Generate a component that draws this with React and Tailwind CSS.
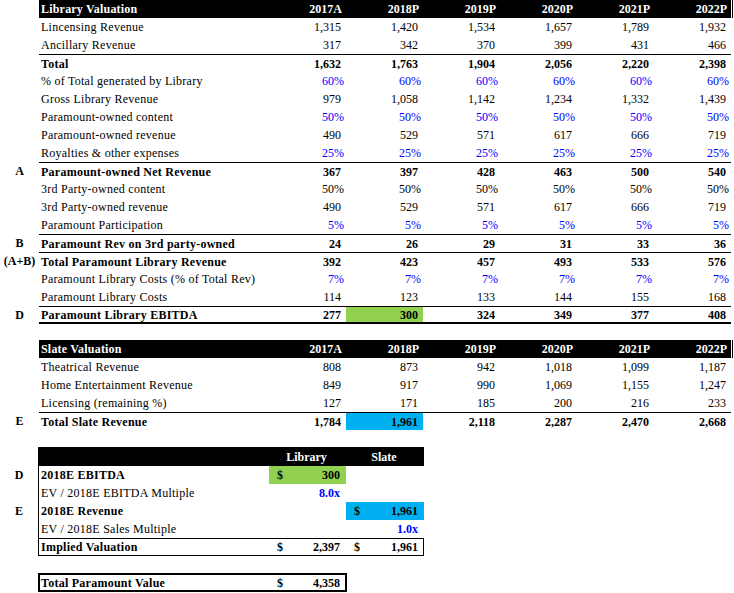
import React from "react";

const YEARS = ["2017A", "2018P", "2019P", "2020P", "2021P", "2022P"];

function Header({ title }) {
  return (
    <div className="flex h-[18px]">
      <div className="w-[39px]" />
      <div className="w-[692px] bg-black text-white font-bold grid grid-cols-[230px_repeat(6,77px)] items-center">
        <div className="pl-[2px] tracking-[0.2px]">{title}</div>
        {YEARS.map((y) => (
          <div key={y} className="text-right pr-[4px]">{y}</div>
        ))}
      </div>
      <div className="w-[1px] ml-[1px] bg-black" />
    </div>
  );
}

function Row({ letter, label, vals, bold, blue, pct, border, thick, hl }) {
  return (
    <div className="flex h-[18px]">
      <div className="w-[39px] flex items-center justify-center font-bold">{letter}</div>
      <div
        className={
          "w-[692px] grid grid-cols-[230px_repeat(6,77px)] " +
          (border ? "border-t border-black " : "") +
          (thick ? "border-b-2 border-black " : "") +
          (bold ? "font-bold" : "")
        }
      >
        <div className="pl-[2px] flex items-center whitespace-nowrap tracking-[0.25px]">{label}</div>
        {vals.map((v, i) => (
          <div
            key={i}
            className={
              "flex items-center justify-end " +
              (pct ? "pr-[2px] " : "pr-[5px] ") +
              (blue ? "text-[#0000ff] " : "") +
              (hl && hl[i] ? hl[i] : "")
            }
          >
            {v}
          </div>
        ))}
      </div>
    </div>
  );
}

function BoxRow({ letter, label, bold, lib, libColor, libDollar, slate, slateColor, slateDollar, blueVal, border }) {
  return (
    <div className="flex h-[18px]">
      <div className="w-[38px] flex items-center justify-center font-bold">{letter}</div>
      <div
        className={
          "w-[386px] border-l border-black grid grid-cols-[230px_77px_78px] " +
          (border ? "border-t border-b border-r" : "")
        }
      >
        <div className={"pl-[2px] flex items-center whitespace-nowrap tracking-[0.25px] " + (bold ? "font-bold" : "")}>{label}</div>
        <div className={"flex items-center justify-between pl-[8px] pr-[6px] " + (libColor || "")}>
          <span className="font-bold">{libDollar ? "$" : ""}</span>
          <span className={bold || blueVal ? "font-bold " + (blueVal ? "text-[#0000ff]" : "") : ""}>{lib}</span>
        </div>
        <div className={"flex items-center justify-between pl-[8px] pr-[6px] " + (slateColor || "")}>
          <span className="font-bold">{slateDollar ? "$" : ""}</span>
          <span className={bold || blueVal ? "font-bold " + (blueVal ? "text-[#0000ff]" : "") : ""}>{slate}</span>
        </div>
      </div>
    </div>
  );
}

export default function App() {
  const P = (s) => Array(6).fill(s);
  return (
    <div className="w-[734px] h-[593px] bg-white text-black text-[12px] leading-none font-['Liberation_Serif',serif] overflow-hidden">
      <Header title="Library Valuation" />
      <Row label="Lincensing Revenue" vals={["1,315", "1,420", "1,534", "1,657", "1,789", "1,932"]} />
      <Row label="Ancillary Revenue" vals={["317", "342", "370", "399", "431", "466"]} />
      <Row label="Total" bold border vals={["1,632", "1,763", "1,904", "2,056", "2,220", "2,398"]} />
      <Row label="% of Total generated by Library" blue pct vals={P("60%")} />
      <Row label="Gross Library Revenue" vals={["979", "1,058", "1,142", "1,234", "1,332", "1,439"]} />
      <Row label="Paramount-owned content" blue pct vals={P("50%")} />
      <Row label="Paramount-owned revenue" vals={["490", "529", "571", "617", "666", "719"]} />
      <Row label="Royalties & other expenses" blue pct vals={P("25%")} />
      <Row letter="A" label="Paramount-owned Net Revenue" bold border vals={["367", "397", "428", "463", "500", "540"]} />
      <Row label="3rd Party-owned content" pct vals={P("50%")} />
      <Row label="3rd Party-owned revenue" vals={["490", "529", "571", "617", "666", "719"]} />
      <Row label="Paramount Participation" blue pct vals={P("5%")} />
      <Row letter="B" label="Paramount Rev on 3rd party-owned" bold border vals={["24", "26", "29", "31", "33", "36"]} />
      <Row letter="(A+B)" label="Total Paramount Library Revenue" bold border vals={["392", "423", "457", "493", "533", "576"]} />
      <Row label="Paramount Library Costs  (% of Total Rev)" blue pct vals={P("7%")} />
      <Row label="Paramount Library Costs" vals={["114", "123", "133", "144", "155", "168"]} />
      <Row
        letter="D"
        label="Paramount Library EBITDA"
        bold
        border
        thick
        vals={["277", "300", "324", "349", "377", "408"]}
        hl={[null, "bg-[#92d050]"]}
      />

      <div className="h-[16px]" />
      <Header title="Slate Valuation" />
      <Row label="Theatrical Revenue" vals={["808", "873", "942", "1,018", "1,099", "1,187"]} />
      <Row label="Home Entertainment Revenue" vals={["849", "917", "990", "1,069", "1,155", "1,247"]} />
      <Row label="Licensing (remaining %)" vals={["127", "171", "185", "200", "216", "233"]} />
      <Row
        letter="E"
        label="Total Slate Revenue"
        bold
        border
        vals={["1,784", "1,961", "2,118", "2,287", "2,470", "2,668"]}
        hl={[null, "bg-[#00b0f0]"]}
      />

      <div className="h-[17px]" />
      <div className="flex h-[19px]">
        <div className="w-[38px]" />
        <div className="w-[386px] bg-black text-white font-bold grid grid-cols-[230px_77px_78px] items-center">
          <div />
          <div className="text-center">Library</div>
          <div className="text-center">Slate</div>
        </div>
      </div>
      <BoxRow letter="D" label="2018E EBITDA" bold lib="300" libDollar libColor="bg-[#92d050]" />
      <BoxRow label="EV / 2018E EBITDA Multiple" lib="8.0x" blueVal />
      <BoxRow letter="E" label="2018E Revenue" bold slate="1,961" slateDollar slateColor="bg-[#00b0f0]" />
      <BoxRow label="EV / 2018E Sales Multiple" slate="1.0x" blueVal />
      <BoxRow label="Implied Valuation" bold border lib="2,397" libDollar slate="1,961" slateDollar />

      <div className="h-[17px]" />
      <div className="flex">
        <div className="w-[38px]" />
        <div className="w-[309px] h-[19px] border-2 border-black grid grid-cols-[229px_76px] font-bold">
          <div className="pl-[1px] flex items-center whitespace-nowrap tracking-[0.25px]">Total Paramount Value</div>
          <div className="flex items-center justify-between pl-[8px] pr-[5px]">
            <span>$</span>
            <span>4,358</span>
          </div>
        </div>
      </div>
    </div>
  );
}
